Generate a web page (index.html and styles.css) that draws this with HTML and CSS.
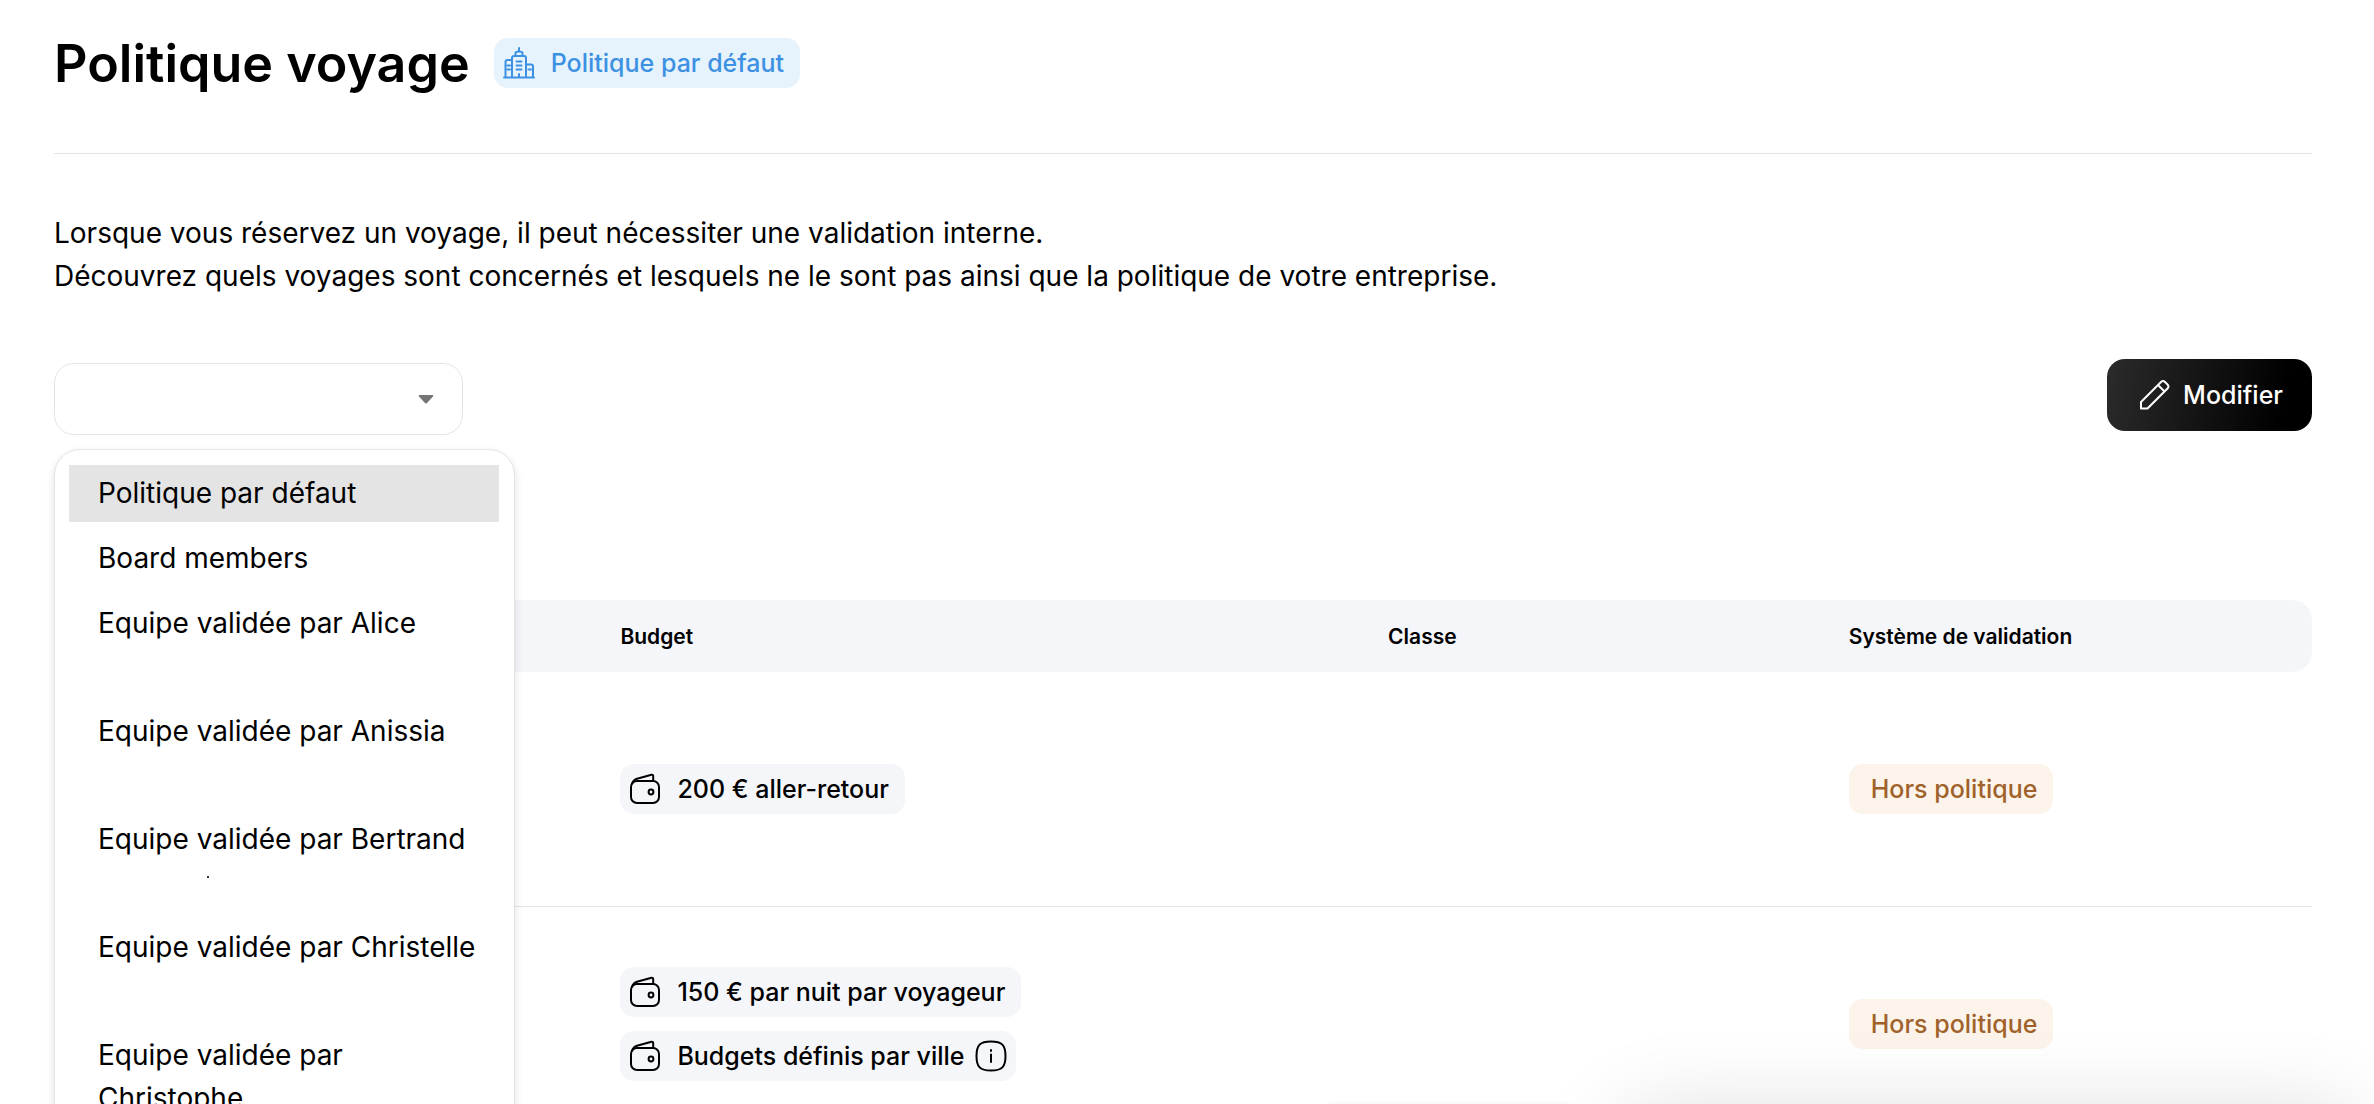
FILE: index.html
```
<!DOCTYPE html>
<html lang="fr">
<head>
    <meta charset="UTF-8">
    <meta name="viewport" content="width=device-width, initial-scale=1.0">
    <title>Politique voyage</title>
    <link rel="stylesheet" href="styles.css">
</head>
<body>
    <!-- shared icons -->
    <svg class="sprite" aria-hidden="true">
        <symbol id="wallet" viewBox="0 0 32 32">
            <rect x="2" y="8" width="28" height="22" rx="6"/>
            <path d="M3 10.500C4 8 5.500 6.500 8 5.700L22.500 1.800Q24.200 1.500 24.200 3.200V8"/>
            <circle cx="22" cy="19" r="2.400"/>
        </symbol>
        <symbol id="info" viewBox="0 0 32 32">
            <path d="M16 1.500C27 1.500 30.500 5 30.500 16S27 30.500 16 30.500 1.500 27 1.500 16 5 1.500 16 1.500Z"/>
            <path d="M16 14.500V22M16 10V11"/>
        </symbol>
    </svg>

    <main class="page">
        <header class="page-header">
            <h1>Politique voyage</h1>
            <span class="badge badge-blue">
                <svg class="icon" viewBox="0 0 32 32">
                    <path d="M1 30.500H31M2.500 30V15Q2.500 13 4.500 13H8.500M23.500 17.500H28Q30 17.500 30 19.500V30M9 30V11Q9 9 11 9H21Q23 9 23 11V30M12.500 9V6Q12.500 4.500 16 4.500T19.500 6V9M16 4.500V1M13.500 14.500H18.500M13.500 18.500H18.500M13.500 22.500H18.500M4.500 18.500H7M4.500 22.500H7M25.500 22.500H28M16 30V27"/>
                </svg>
                Politique par défaut
            </span>
        </header>

        <p class="intro">
            Lorsque vous réservez un voyage, il peut nécessiter une validation interne.<br>
            Découvrez quels voyages sont concernés et lesquels ne le sont pas ainsi que la politique de votre entreprise.
        </p>

        <div class="toolbar">
            <div class="policy-picker">
                <label class="select-box">
                    <select class="select" aria-label="Politique">
                        <option value=""></option>
                    </select>
                    <svg class="caret" viewBox="0 0 16 9" aria-hidden="true"><path d="M1.500 0H14.500Q16 0 15 1.500L9 8Q8 9 7 8L1 1.500Q0 0 1.500 0Z"/></svg>
                </label>
                <ul class="menu" role="listbox">
                    <li class="option selected" role="option" aria-selected="true">Politique par défaut</li>
                    <li class="option" role="option">Board members</li>
                    <li class="option two-lines" role="option">Equipe validée par Alice</li>
                    <li class="option two-lines" role="option">Equipe validée par Anissia</li>
                    <li class="option two-lines" role="option">Equipe validée par Bertrand<span class="speck"></span></li>
                    <li class="option two-lines" role="option">Equipe validée par Christelle</li>
                    <li class="option two-lines" role="option">Equipe validée par Christophe</li>
                </ul>
            </div>
            <button class="btn-edit" type="button">
                <svg class="icon" viewBox="0 0 32 32">
                    <path d="M3 29.500V23L23 3Q25 1 27 3L29.500 5.500Q31.500 7.500 29.500 9.500L9.500 29.500ZM20 6L26.500 12.500"/>
                </svg>
                Modifier
            </button>
        </div>

        <table class="rules">
            <thead>
                <tr>
                    <th class="col-type"></th>
                    <th class="col-budget">Budget</th>
                    <th class="col-class">Classe</th>
                    <th class="col-validation">Système de validation</th>
                </tr>
            </thead>
            <tbody>
                <tr>
                    <td></td>
                    <td>
                        <div class="badges">
                            <span class="badge"><svg class="icon"><use href="#wallet"/></svg>200 € aller-retour</span>
                        </div>
                    </td>
                    <td></td>
                    <td><span class="badge badge-orange">Hors politique</span></td>
                </tr>
                <tr>
                    <td></td>
                    <td>
                        <div class="badges">
                            <span class="badge"><svg class="icon"><use href="#wallet"/></svg>150 € par nuit par voyageur</span>
                            <span class="badge badge-info"><svg class="icon"><use href="#wallet"/></svg>Budgets définis par ville<svg class="icon icon-info"><use href="#info"/></svg></span>
                        </div>
                    </td>
                    <td></td>
                    <td><span class="badge badge-orange">Hors politique</span></td>
                </tr>
            </tbody>
        </table>
    </main>

    <div class="chat-hint"></div>
    <div class="chat-panel"></div>
</body>
</html>
```
FILE: styles.css
```
* {
    box-sizing: border-box;
}
body {
    margin: 0;
    height: 100vh;
    overflow: hidden;
    background: #fff;
    color: #000;
    font-family: Inter, "Liberation Sans", sans-serif;
    font-size: 28px;
    line-height: 43px;
}
.sprite {
    position: absolute;
    width: 0;
    height: 0;
}
.page {
    padding: 30px 62px 0 54px;
}

/* Header */
.page-header {
    display: flex;
    align-items: flex-start;
    gap: 24px;
    height: 124px;
    border-bottom: 1px solid #e4e4e4;
}
h1 {
    margin: 0;
    font-size: 52px;
    font-weight: 600;
    line-height: 68px;
}
.page-header .badge {
    margin-top: 8px;
}
.intro {
    margin: 58px 0 61px;
}

/* Badges */
.badge {
    display: inline-flex;
    align-items: center;
    gap: 16px;
    height: 50px;
    padding: 0 16px 0 9px;
    border-radius: 14px;
    background: #f5f6fa;
    font-size: 25px;
    font-weight: 500;
    white-space: nowrap;
}
.badge-blue {
    background: #e6f3fd;
    color: #3d91e2;
}
.badge-orange {
    padding: 0 16px 0 22px;
    background: #fcf4ea;
    color: #a0622a;
}
.badge-info {
    padding-right: 9px;
}
.badges {
    display: flex;
    flex-direction: column;
    align-items: flex-start;
    gap: 14px;
}
.icon {
    flex: none;
    width: 32px;
    height: 32px;
    fill: none;
    stroke: currentColor;
    stroke-width: 2;
    stroke-linecap: round;
    stroke-linejoin: round;
}
.icon-info {
    margin-left: -6px;
}

/* Toolbar */
.toolbar {
    display: flex;
    justify-content: space-between;
    align-items: flex-start;
}
.policy-picker {
    position: relative;
    padding-top: 4px;
}
.select-box {
    display: flex;
    align-items: center;
    position: relative;
}
.select {
    appearance: none;
    width: 409px;
    height: 72px;
    padding: 0 60px 0 20px;
    border: 1px solid #e4e4e4;
    border-radius: 20px;
    background: #fff;
    font: inherit;
}
.caret {
    position: absolute;
    right: 29px;
    width: 16px;
    height: 9px;
    fill: #757575;
    pointer-events: none;
}
.menu {
    position: absolute;
    z-index: 2;
    top: 90px;
    left: 0;
    width: 461px;
    margin: 0;
    padding: 15px 15px 30px 14px;
    border: 1px solid #e4e4e4;
    border-radius: 26px;
    background: #fff;
    box-shadow: 0 4px 8px rgba(0, 0, 0, 0.12);
    list-style: none;
}
.option {
    position: relative;
    margin-bottom: 8px;
    padding: 7px 14px 7px 29px;
}
.option.selected {
    background: #e4e4e4;
}
.option.two-lines {
    min-height: 100px;
}
.speck {
    position: absolute;
    left: 138px;
    top: 65px;
    width: 2px;
    height: 2px;
    background: #333;
}
.btn-edit {
    display: flex;
    align-items: center;
    gap: 13px;
    height: 72px;
    padding: 0 29px 0 31px;
    border: 0;
    border-radius: 18px;
    background: linear-gradient(100deg, #2b2b2b, #000 85%);
    color: #fff;
    font-family: inherit;
    font-size: 25px;
    font-weight: 500;
}

/* Rules table */
.rules {
    width: 100%;
    margin-top: 165px;
    border-collapse: separate;
    border-spacing: 0;
    table-layout: fixed;
}
th {
    height: 72px;
    padding: 0 0 0 29px;
    background: #f5f6fa;
    font-size: 21px;
    font-weight: 600;
    text-align: left;
}
th:first-child {
    border-radius: 20px 0 0 20px;
}
th:last-child {
    border-radius: 0 20px 20px 0;
}
td {
    height: 235px;
    padding: 0 0 0 29px;
    border-bottom: 1px solid #e4e4e4;
    vertical-align: middle;
}
.col-type {
    width: 23.8%;
}
.col-budget {
    width: 34%;
}
.col-class {
    width: 20.4%;
}

/* Floating chat, starts just under the fold */
.chat-panel,
.chat-hint {
    position: fixed;
    background: #fff;
}
.chat-panel {
    right: 20px;
    bottom: -150px;
    width: 730px;
    height: 140px;
    border-radius: 20px;
    box-shadow: 0 0 90px rgba(0, 0, 0, 0.14);
}
.chat-hint {
    right: 800px;
    bottom: -64px;
    width: 250px;
    height: 60px;
    border-radius: 10px;
    box-shadow: 0 0 10px rgba(0, 0, 0, 0.16);
}
```
